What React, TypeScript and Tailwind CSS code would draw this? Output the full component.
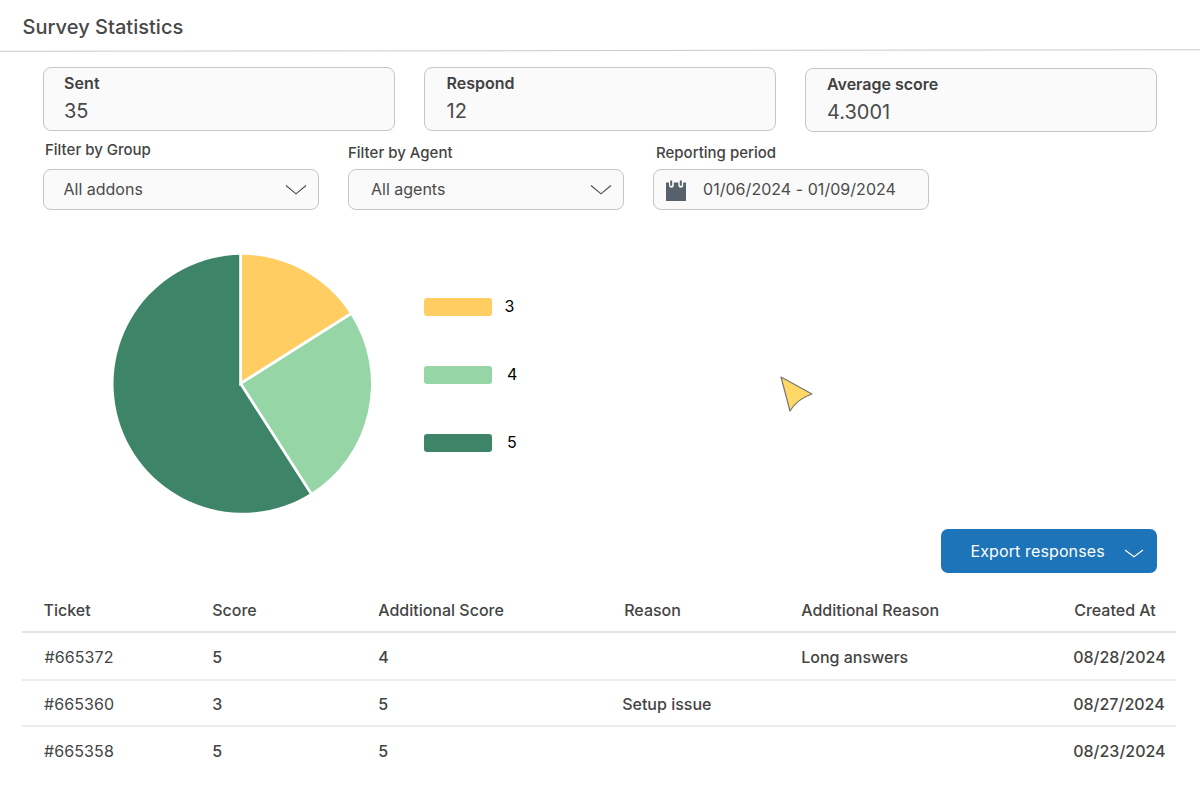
import type { ReactNode } from "react";

const stats = [
  { label: "Sent", value: "35", box: "pl-[20px]", labelClass: "tracking-[0.1px]" },
  { label: "Respond", value: "12", box: "pl-[21.5px]", labelClass: "tracking-[0.02px]" },
  { label: "Average score", value: "4.3001", box: "pl-[21px] mt-px", labelClass: "" },
];

const legend = [
  { label: "3", color: "bg-[#ffcd62]", pad: "ml-[12.5px]" },
  { label: "4", color: "bg-[#96d5a6]", pad: "ml-[15px]" },
  { label: "5", color: "bg-[#3e8468]", pad: "ml-[15px]" },
];

const rows = [
  { ticket: "#665372", score: "5", extra: "4", reason: "", extraReason: "Long answers", date: "08/28/2024", size: "h-12 border-[#ececec]", ticketClass: "pl-[0.5px] tracking-[0.1px]" },
  { ticket: "#665360", score: "3", extra: "5", reason: "Setup issue", extraReason: "", date: "08/27/2024", size: "h-[46px] border-[#ececec]", ticketClass: "tracking-[0.1px]" },
  { ticket: "#665358", score: "5", extra: "5", reason: "", extraReason: "", date: "08/23/2024", size: "h-12 border-transparent", ticketClass: "tracking-[0.1px]" },
];

const columns = "grid grid-cols-[168.2px_166px_246px_177px_273px_102px] items-center pl-[22px]";

function Chevron({ className }: { className: string }) {
  return (
    <svg className={className} width="22" height="11" viewBox="0 0 22 11" fill="none" stroke="currentColor" strokeWidth="1.1">
      <path d="M1 1.5 L11 9.8 L21 1.5" />
    </svg>
  );
}

function Calendar() {
  return (
    <svg className="ml-[11px] shrink-0" width="22" height="24" viewBox="0 0 22 24">
      <path d="M1 4.5h20V23H1z" fill="#56616c" />
      <path d="M4 2h4.8v5.4a2.4 2.4 0 0 1-4.8 0zM13.4 2h4.8v5.4a2.4 2.4 0 0 1-4.8 0z" fill="#fcfcfc" />
      <path d="M6.2 2.4v5.4M15.8 2.4v5.4" stroke="#56616c" strokeWidth="2" />
    </svg>
  );
}

function Field({ label, labelClass, children }: { label: string; labelClass: string; children: ReactNode }) {
  return (
    <div className="flex w-[276px] flex-col">
      <div className={labelClass}>
        <div className="h-5 text-[15px] leading-5 font-medium text-[#444]">{label}</div>
      </div>
      <div className="flex h-[41px] items-center rounded-[8px] border border-[#c6c6c6] bg-[#fafafa] text-base text-[#4b4b4b]">
        {children}
      </div>
    </div>
  );
}

function Pie() {
  return (
    <svg className="ml-[112px] shrink-0" width="260" height="260" viewBox="112 254 260 260">
      <path d="M241 383.5V254.8A129 129 0 0 1 350.4 314.2z" fill="#ffcd62" />
      <path d="M241 383.5L350.4 314.2A129 129 0 0 1 310.7 493.3z" fill="#96d5a6" />
      <path d="M241 383.5L310.7 493.3A129 129 0 1 1 241 254.8z" fill="#3e8468" />
      <path d="M240.6 252V383.5L354 311.7M240.6 383.5L313 496.5" fill="none" stroke="#fff" strokeWidth="2.8" />
    </svg>
  );
}

export default function App() {
  return (
    <div className="relative flex h-[788px] w-[1200px] flex-col overflow-hidden bg-white font-['Inter',sans-serif] text-[#414141]">
      <header className="flex h-[50px] flex-col">
        <h1 className="h-[49px] shrink-0 pt-[13px] pl-[22.5px] text-[20px] leading-7 font-medium tracking-[0.03px] text-[#484848]">Survey Statistics</h1>
        <div className="mt-[0.6px] h-px shrink-0 -rotate-[0.08deg] bg-[#cbcbcb]" />
      </header>

      <section className="mt-[17px] flex h-[65px] gap-[29px] pl-[43px]">
        {stats.map((s) => (
          <div key={s.label} className={`h-16 w-[352px] rounded-[8px] border border-[#c6c6c6] bg-[#fafafa] pt-1 ${s.box}`}>
            <div className={`text-base leading-[22px] font-semibold ${s.labelClass}`}>{s.label}</div>
            <div className="mt-px text-[20px] leading-8 text-[#4a4a4a]">{s.value}</div>
          </div>
        ))}
      </section>

      <section className="mt-2 flex gap-[29px] pl-[43px]">
        <Field label="Filter by Group" labelClass="pb-[9px] pl-[2px]">
          <span className="pb-0.5 pl-[19.5px]">All addons</span>
          <Chevron className="mr-[11px] ml-auto" />
        </Field>
        <Field label="Filter by Agent" labelClass="pt-[3px] pb-[6px]">
          <span className="pb-0.5 pl-[22px]">All agents</span>
          <Chevron className="mr-[11px] ml-auto" />
        </Field>
        <Field label="Reporting period" labelClass="pt-[3px] pb-[6px] pl-[3px]">
          <Calendar />
          <span className="pb-0.5 pl-[16px] tracking-[0.04px]">01/06/2024 - 01/09/2024</span>
        </Field>
      </section>

      <section className="mt-[44px] flex h-[260px]">
        <Pie />
        <div className="ml-[52px] flex flex-col gap-[48px] pt-[43px]">
          {legend.map((item) => (
            <div key={item.label} className="flex h-5 items-center text-base text-black">
              <span className={`h-[18px] w-[68px] rounded-[3px] ${item.color}`} />
              <span className={`pb-0.5 ${item.pad}`}>{item.label}</span>
            </div>
          ))}
        </div>
      </section>

      <div className="mt-[15px] flex justify-end pr-[43px]">
        <button className="flex h-11 w-[216px] items-center rounded-[7px] bg-[#1d74b9] pl-[29.5px] text-base text-white">
          <span className="tracking-[0.12px]">Export responses</span>
          <svg className="mt-1 mr-[13px] ml-auto" width="20" height="9" viewBox="0 0 20 9" fill="none" stroke="currentColor" strokeWidth="1.1">
            <path d="M1 1 L10 7.8 L19 1" />
          </svg>
        </button>
      </div>

      <section className="mt-[15px] mr-6 ml-[22px] text-base font-medium text-[#444]">
        <div className={`h-[45px] border-b-2 border-[#e2e2e2] ${columns}`}>
          <span className="-ml-[0.5px]">Ticket</span>
          <span>Score</span>
          <span>Additional Score</span>
          <span>Reason</span>
          <span>Additional Reason</span>
          <span>Created At</span>
        </div>
        {rows.map((row) => (
          <div key={row.ticket} className={`border-b-2 pt-0.5 ${row.size} ${columns}`}>
            <span className={`font-normal ${row.ticketClass}`}>{row.ticket}</span>
            <span>{row.score}</span>
            <span>{row.extra}</span>
            <span className="-ml-[2px]">{row.reason}</span>
            <span>{row.extraReason}</span>
            <span className="-ml-px">{row.date}</span>
          </div>
        ))}
      </section>

      <svg className="absolute top-[373px] left-[777px]" width="40" height="42" viewBox="777 373 40 42">
        <path d="M781 377L812 394Q797 399 790 411Z" fill="#ffd866" stroke="#777" strokeWidth="1.2" strokeLinejoin="round" />
      </svg>
    </div>
  );
}
